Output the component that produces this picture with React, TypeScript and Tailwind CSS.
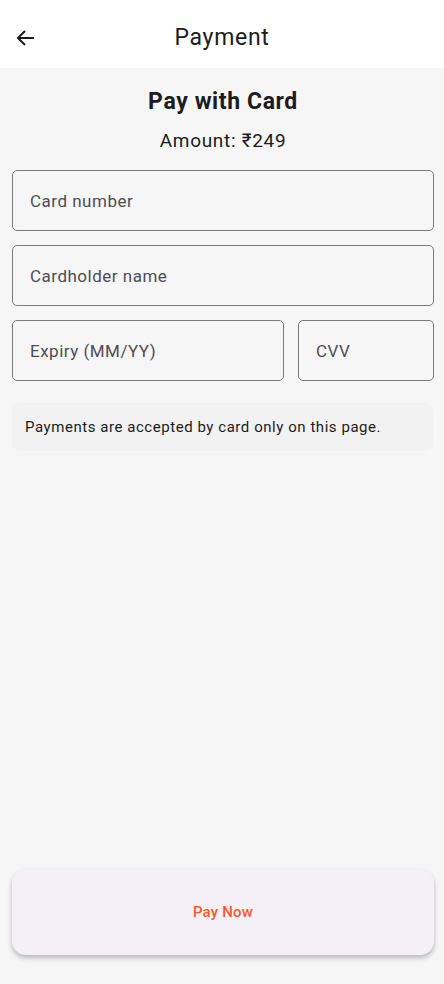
import { useState } from 'react'

export default function App() {
  const [cardNumber, setCardNumber] = useState('')
  const [name, setName] = useState('')
  const [expiry, setExpiry] = useState('')
  const [cvv, setCvv] = useState('')

  const field =
    'h-[61px] w-full min-w-0 rounded-[5px] border border-[#7a7a7e] bg-transparent px-[17px] text-[17px] tracking-[0.5px] text-[#1d1b20] placeholder:text-[#4f4c55] outline-none'

  return (
    <div className="flex h-[984px] flex-col bg-[#f6f6f6] font-['Roboto',sans-serif]">
      {/* App bar */}
      <header className="relative flex h-[68px] shrink-0 items-center justify-center bg-white">
        <button className="absolute left-[12px] top-[24px] p-[2px] text-[#1d1b20]">
          <svg className="h-[24px] w-[24px]" viewBox="0 0 24 24" fill="none" stroke="currentColor" strokeWidth={2}>
            <path d="M20 12H5M11 5l-7 7 7 7" strokeLinejoin="miter" />
          </svg>
        </button>
        <h1 className="mt-[8px] text-[23px] tracking-[0.7px] text-[#1d1b20]">Payment</h1>
      </header>

      <main className="flex flex-1 flex-col pl-3 pr-[10px]">
        <h2 className="mt-[19px] text-center text-[23px] font-bold leading-[30px] tracking-[0.6px] text-[#1d1b20]">Pay with Card</h2>
        <p className="mt-[12px] text-center text-[19px] leading-[24px] tracking-[0.7px] text-[#1d1b20]">Amount: ₹249</p>

        <div className="mt-[17px] flex flex-col gap-[14px]">
          <input className={field} placeholder="Card number" value={cardNumber} onChange={e => setCardNumber(e.target.value)} />
          <input className={field} placeholder="Cardholder name" value={name} onChange={e => setName(e.target.value)} />
          <div className="grid grid-cols-[2fr_1fr] gap-[14px]">
            <input className={field} placeholder="Expiry (MM/YY)" value={expiry} onChange={e => setExpiry(e.target.value)} />
            <input className={field} placeholder="CVV" value={cvv} onChange={e => setCvv(e.target.value)} />
          </div>
        </div>

        <div className="mt-[22px] flex h-[48px] items-center rounded-[8px] bg-[#f2f2f2] px-[13px] text-[15px] tracking-[0.55px] text-[#1d1b20]">
          Payments are accepted by card only on this page.
        </div>

        <div className="mt-auto mb-[29px]">
          <button className="flex h-[86px] w-full items-center justify-center rounded-[14px] bg-[#f5f0f8] text-[15px] font-medium tracking-[0.2px] text-[#ff5722] shadow-[0_3px_5px_rgba(0,0,0,0.25)]">
            Pay Now
          </button>
        </div>
      </main>
    </div>
  )
}
